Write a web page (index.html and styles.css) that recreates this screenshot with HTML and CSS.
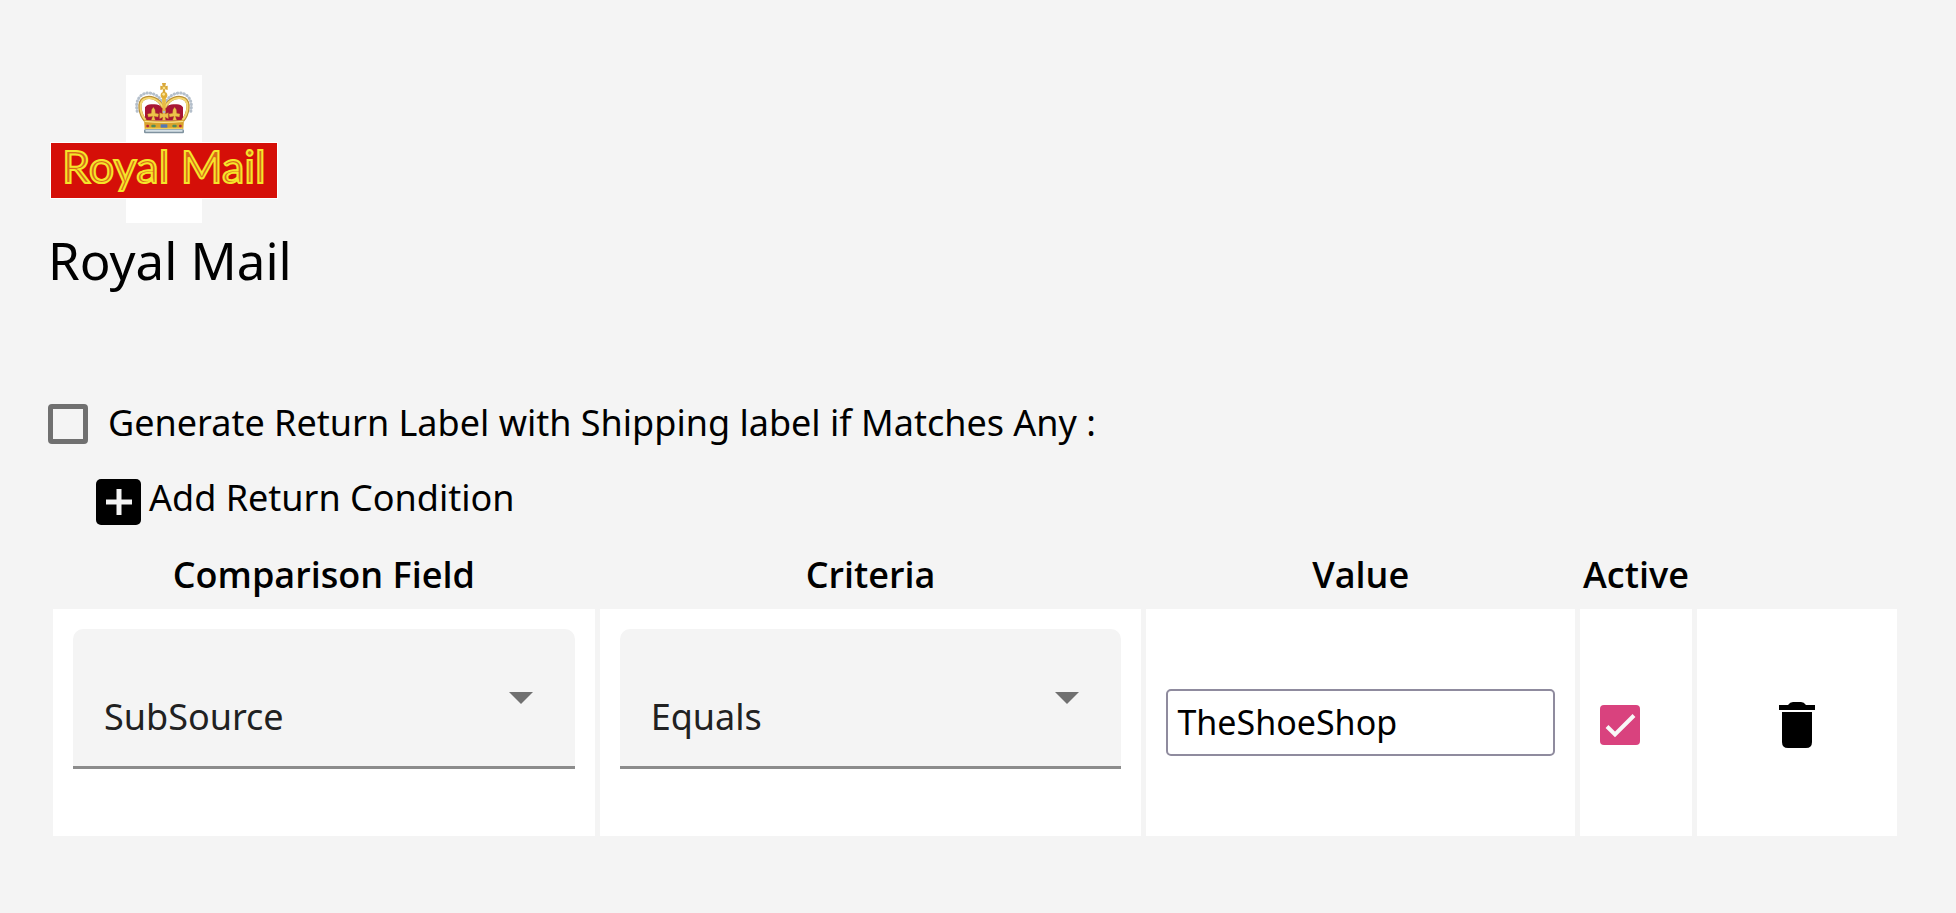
FILE: index.html
```html
<!DOCTYPE html>
<html lang="en">
<head>
    <meta charset="UTF-8">
    <title>Royal Mail</title>
    <link rel="stylesheet" href="styles.css">
</head>
<body>
<div class="page">
    <svg class="logo" width="228" height="150" viewBox="0 0 228 150" role="img" aria-label="Royal Mail logo">
        <rect x="76" y="1" width="76" height="148" fill="#fff"/>
        <!-- crown -->
        <g transform="translate(70 -4) scale(.3333)">
            <path d="M124 92C108 66 76 62 60 80C49 92 48 108 52 126" fill="none" stroke="#b4bfcb" stroke-width="9" stroke-linecap="round" stroke-dasharray="1 9"/>
            <path d="M140 92C156 66 188 62 204 80C215 92 216 108 212 126" fill="none" stroke="#b4bfcb" stroke-width="9" stroke-linecap="round" stroke-dasharray="1 9"/>
            <path d="M75 152V112Q82 101 98 103Q115 100 132 116Q149 100 166 103Q182 101 189 112V152Z" fill="#a81635"/>
            <path d="M76 152C58 130 54 98 70 87C88 76 116 84 129 112" fill="none" stroke="#b98f35" stroke-width="10"/>
            <path d="M188 152C206 130 210 98 194 87C176 76 148 84 135 112" fill="none" stroke="#b98f35" stroke-width="10"/>
            <path d="M76 150C60 130 56 99 71 88C88 78 116 86 129 112" fill="none" stroke="#f5d873" stroke-width="6"/>
            <path d="M188 150C204 130 208 99 193 88C176 78 148 86 135 112" fill="none" stroke="#f5d873" stroke-width="6"/>
            <path d="M126 80H138L136 138H128Z" fill="#e8bb43"/>
            <circle cx="132" cy="76" r="10" fill="#e0ad36"/>
            <circle cx="131" cy="73" r="4" fill="#fae69a"/>
            <path d="M128 68L129 58L121 60V47L128 49L126 39H138L136 49L143 47V60L135 58L136 68Z" fill="#d9a83a"/>
            <circle cx="132" cy="54" r="4" fill="#f9e188"/>
            <g fill="#edc34a" stroke="#b98628" stroke-width="1">
                <path d="M94 151L98 139L85 141L83 132L94 130L95 119L100 112L105 119L106 130L116 132L114 141L102 139L106 151Z"/>
                <path d="M158 151L162 139L149 141L147 132L158 130L159 119L164 112L169 119L170 130L180 132L178 141L166 139L170 151Z"/>
                <path d="M127 151L129 141L119 146V128L129 132L127 121H137L135 132L145 128V146L135 141L137 151Z"/>
            </g>
            <circle cx="132" cy="126" r="4" fill="#a9bccb"/>
            <path d="M72 149Q132 156 192 149L190 177H74Z" fill="#d9a32c"/>
            <path d="M74 154Q132 160 190 154" fill="none" stroke="#f8e08a" stroke-width="4"/>
            <path d="M76 175H188" stroke="#f4ce58" stroke-width="4"/>
            <rect x="122" y="163" width="20" height="10" fill="#5177b5"/>
            <rect x="94" y="164" width="13" height="8" rx="3" fill="#4f8a5b"/>
            <rect x="157" y="164" width="13" height="8" rx="3" fill="#4f8a5b"/>
            <rect x="79" y="164" width="8" height="8" rx="3" fill="#b5263b"/>
            <rect x="177" y="164" width="8" height="8" rx="3" fill="#b5263b"/>
            <rect x="72" y="178" width="120" height="12" rx="4" fill="#7f929f"/>
            <rect x="76" y="180" width="112" height="5" rx="2" fill="#d5e0e6"/>
        </g>
        <rect x="0" y="68" width="228" height="57" fill="#fff"/>
        <rect x="1" y="69" width="226" height="55" fill="#d50f08"/>
        <text class="logo-text" x="12" y="109">Royal Mail</text>
    </svg>
    <h1 class="title">Royal Mail</h1>

    <div class="option">
        <input class="check" type="checkbox" id="returnLabel">
        <label for="returnLabel">Generate Return Label with Shipping label if Matches Any :</label>
    </div>

    <button class="add" type="button">
        <svg width="45" height="46" viewBox="0 0 45 46" aria-hidden="true">
            <rect width="45" height="46" rx="5"/>
            <path d="M23 10V36M10 23H36" stroke="#f4f4f4" stroke-width="5"/>
        </svg>
        <span>Add Return Condition</span>
    </button>

    <table class="conditions">
        <colgroup>
            <col class="col-field">
            <col class="col-field">
            <col class="col-value">
            <col class="col-active">
            <col class="col-delete">
        </colgroup>
        <thead>
            <tr>
                <th>Comparison Field</th>
                <th>Criteria</th>
                <th>Value</th>
                <th>Active</th>
                <th></th>
            </tr>
        </thead>
        <tbody>
            <tr>
                <td>
                    <div class="select">
                        <select aria-label="Comparison Field">
                            <option>SubSource</option>
                        </select>
                        <svg class="arrow" width="24" height="12" viewBox="0 0 24 12" aria-hidden="true"><path d="M0 0H24L12 12Z"/></svg>
                    </div>
                </td>
                <td>
                    <div class="select">
                        <select aria-label="Criteria">
                            <option>Equals</option>
                        </select>
                        <svg class="arrow" width="24" height="12" viewBox="0 0 24 12" aria-hidden="true"><path d="M0 0H24L12 12Z"/></svg>
                    </div>
                </td>
                <td><input class="value" type="text" value="TheShoeShop" aria-label="Value"></td>
                <td>
                    <div class="active">
                        <input class="check" type="checkbox" aria-label="Active" checked>
                        <svg class="tick" width="40" height="40" viewBox="0 0 40 40" aria-hidden="true"><path d="M7 21.500L15 29.500L34 10.500"/></svg>
                    </div>
                </td>
                <td>
                    <button class="delete" type="button" aria-label="Delete">
                        <svg width="36" height="46" viewBox="0 0 36 46" aria-hidden="true">
                            <path d="M0 3H9Q11 0 14 0H22Q25 0 27 3H36V8H0Z"/>
                            <path d="M3 10H33V40Q33 46 27 46H9Q3 46 3 40Z"/>
                        </svg>
                    </button>
                </td>
            </tr>
        </tbody>
    </table>
</div>
</body>
</html>
```

FILE: styles.css
```css
*{
    box-sizing: border-box;
}
body{
    margin: 0;
    background-color: #f4f4f4;
    color: #000;
    font-family: "Noto Sans", "Open Sans", sans-serif;
    font-size: 36px;
    line-height: 38px;
}
button,input,select{
    font: inherit;
    color: inherit;
    margin: 0;
}
.page{
    padding: 74px 54px 72px 48px;
}
.logo{
    display: block;
    margin-left: 2px;
}
.logo-text{
    font-family: Lato, sans-serif;
    font-size: 45px;
    fill: #d9681a;
    stroke: #f5e52a;
    stroke-width: 2px;
}
.title{
    margin: 6px 0 114px;
    font-size: 51px;
    line-height: 60px;
    font-weight: 400;
}
.option{
    display: flex;
    gap: 20px;
}
.check{
    appearance: none;
    flex: none;
    width: 40px;
    height: 40px;
    border: 5px solid #707070;
    border-radius: 4px;
}
.check:checked{
    border: none;
    background-color: #d9427e;
}
.add{
    display: flex;
    gap: 8px;
    margin: 35px 0 16px 48px;
    padding: 0;
    border: none;
    background: none;
}
.conditions{
    width: 100%;
    table-layout: fixed;
    border-spacing: 5px;
}
.col-field{
    width: 29.7%;
}
.col-active{
    width: 112px;
}
.col-delete{
    width: 200px;
}
.conditions th{
    padding: 0;
    line-height: 58px;
    font-family: "Open Sans", sans-serif;
    font-weight: 600;
}
.conditions td{
    padding: 20px;
    background-color: #fff;
}
.select{
    position: relative;
    margin-bottom: 47px;
}
.select select{
    appearance: none;
    display: block;
    width: 100%;
    height: 140px;
    padding: 38px 72px 0 31px;
    border: none;
    border-bottom: 3px solid #8c8c8c;
    border-radius: 10px 10px 0 0;
    background-color: #f4f4f4;
    color: #212121;
    line-height: 50px;
}
.arrow{
    position: absolute;
    right: 42px;
    top: 63px;
    fill: #707070;
    pointer-events: none;
}
.value{
    display: block;
    width: 100%;
    height: 67px;
    padding: 0 9px 2px;
    border: 2px solid #8f8b9e;
    border-radius: 5px;
    background-color: #fff;
    font-size: 34px;
}
.active{
    position: relative;
    padding-top: 5px;
}
.active .check{
    display: block;
}
.tick{
    position: absolute;
    left: 0;
    bottom: 0;
    fill: none;
    stroke: #f8f8f8;
    stroke-width: 4px;
    pointer-events: none;
}
.delete{
    display: block;
    margin: 0 auto;
    padding: 5px 0 0;
    border: none;
    background: none;
}
.delete svg{
    display: block;
}
```
